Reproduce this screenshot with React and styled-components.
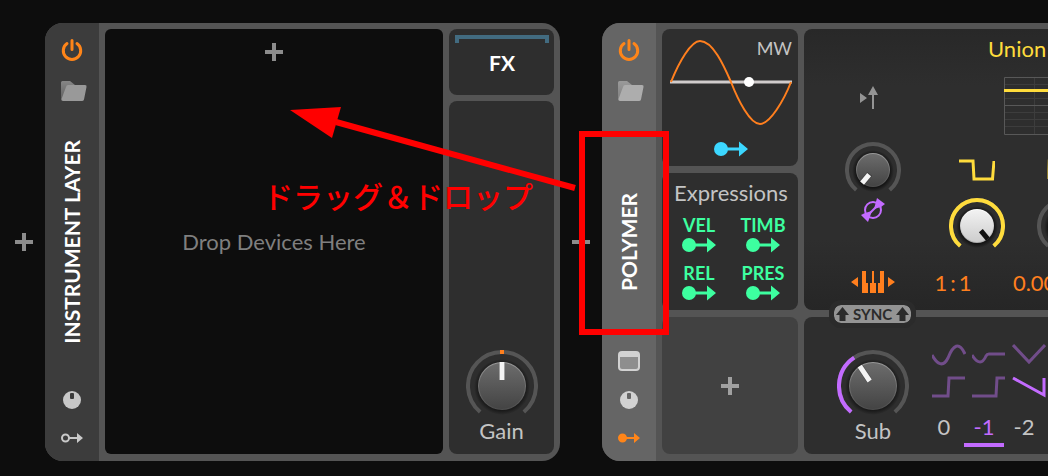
import { useId, useState } from "react";
import styled, { createGlobalStyle } from "styled-components";

const GlobalStyle = createGlobalStyle`
  * {
    box-sizing: border-box;
  }
  body {
    margin: 0;
    background: #0d0d0d;
    color: #c4c4c4;
    font-family: Lato, "Noto Sans CJK JP", sans-serif;
    font-size: 22px;
    line-height: 24px;
  }
  svg {
    display: block;
    flex: none;
  }
  button {
    padding: 0;
    border: 0;
    background: none;
    color: inherit;
    font: inherit;
    cursor: pointer;
  }
`;

const Page = styled.main`
  position: relative;
  display: flex;
  min-height: 100vh;
  padding: 23px 0 15px;
  overflow: hidden;
`;

const Gutter = styled.div`
  display: flex;
  flex: none;
  align-items: center;
  justify-content: ${(props) => props.$justify || "center"};
  width: ${(props) => props.$width};
  padding-right: ${(props) => props.$pad || "0"};
`;

const Device = styled.section`
  display: flex;
  flex: ${(props) => props.$flex};
  min-width: 0;
  border-radius: ${(props) => props.$radius};
  background: #545454;
  overflow: hidden;
`;

const Strip = styled.header`
  display: grid;
  flex: none;
  grid-template-rows: 1fr auto 1fr;
  justify-items: center;
  width: 54px;
  padding: 11px 0;
  background: ${(props) => (props.$selected ? "#656565" : "#3c3c3c")};
`;

const StripGroup = styled.div`
  display: flex;
  flex-direction: column;
  align-items: center;
  align-self: ${(props) => props.$align};
  gap: ${(props) => props.$gap};
  margin-top: 4px;
`;

const StripTitle = styled.h2`
  margin: 0;
  writing-mode: vertical-rl;
  transform: rotate(180deg);
  color: #fff;
  font-size: 21px;
  font-weight: 700;
  white-space: nowrap;
`;

const Body = styled.div`
  display: grid;
  flex: 1;
  grid-template-columns: ${(props) => props.$columns};
  gap: 6px;
  min-width: 0;
  padding: ${(props) => props.$padding};
`;

const Rows = styled.div`
  display: grid;
  grid-template-rows: ${(props) => props.$rows};
  gap: ${(props) => props.$gap};
  min-width: 0;
`;

const Panel = styled.div`
  display: flex;
  flex-direction: column;
  align-items: center;
  min-width: 0;
  padding: ${(props) => props.$padding || "0"};
  border-radius: 8px;
  background: #2e2e2e;
`;

const DropZone = styled.div`
  display: grid;
  grid-template-rows: 1fr auto 1fr;
  justify-items: center;
  padding: 14px 0;
  border-radius: 6px;
  background: #0d0d0d;
  color: #7f7f7f;
`;

const AddButton = styled.button`
  align-self: start;
`;

const FxButton = styled.button`
  display: flex;
  flex-direction: column;
  align-items: center;
  gap: 8px;
  padding: 6px 5px 6px 6px;
  border-radius: 8px;
  background: #2e2e2e;
  color: #fff;
  font-size: 21px;
  font-weight: 700;
`;

const FxBracket = styled.span`
  width: 100%;
  height: 8px;
  border: 4px solid #426b80;
  border-bottom: 0;
`;

const KnobLabel = styled.label`
  position: relative;
  display: flex;
  flex-direction: column;
  align-items: center;
  cursor: pointer;
`;

const KnobInput = styled.input`
  position: absolute;
  inset: 0;
  width: 100%;
  height: 100%;
  margin: 0;
  opacity: 0;
  cursor: pointer;
`;

const GainPanel = styled(Panel)`
  justify-content: flex-end;
  padding-bottom: 11px;
`;

const SlotButton = styled.button`
  display: flex;
  align-items: center;
  justify-content: center;
  border-radius: 8px;
  background: #414141;
`;

const Scope = styled.div`
  display: grid;
  width: 100%;

  > * {
    grid-area: 1 / 1;
  }
`;

const ScopeLabel = styled.span`
  justify-self: end;
  font-size: 18px;
  line-height: 20px;
`;

const RouteButton = styled.button`
  margin-top: 15px;
  padding-left: 2px;
  color: #3cd7ff;
`;

const PanelTitle = styled.h3`
  margin: 0;
  font-size: 22px;
  font-weight: 400;
`;

const Expressions = styled.div`
  display: grid;
  grid-template-columns: repeat(2, 64px);
  gap: 10px 0;
  margin-top: 10px;
`;

const ExpressionButton = styled.button`
  display: flex;
  flex-direction: column;
  align-items: center;
  gap: 2px;
  color: #3dffa0;
  font-size: 18px;
  font-weight: 700;
  line-height: 20px;
`;

const Oscillator = styled.div`
  display: flex;
  grid-row: span 2;
  min-width: 0;
  padding-left: 33px;
  border-radius: 8px 0 0 8px;
  background: linear-gradient(#282828, #2e2e2e 20%, #2e2e2e 75%, #262626);
  overflow: hidden;
`;

const PhaseColumn = styled.div`
  display: flex;
  flex: none;
  flex-direction: column;
  align-items: center;
  width: 72px;
  padding-top: 57px;
`;

const PhaseKnob = styled.div`
  margin-top: 32px;
`;

const KeysButton = styled.button`
  margin-top: 48px;
`;

const WaveColumn = styled.div`
  display: flex;
  flex: none;
  flex-direction: column;
  align-items: flex-start;
  gap: 16px;
  padding-top: 8px;
`;

const WaveSelect = styled.button`
  margin-left: 79px;
  color: #ffdc3c;
`;

const WaveGraph = styled.div`
  margin: 0 0 8px 95px;
`;

const Cells = styled.div`
  display: grid;
  grid-template-columns: repeat(2, 88px);
  justify-items: center;
  margin-left: ${(props) => props.$indent || "0"};
`;

const Ratio = styled.span`
  display: flex;
  gap: 3px;
  color: #ff7f1e;
  line-height: 26px;
`;

const SubPanel = styled.div`
  position: relative;
  display: flex;
  gap: 15px;
  min-width: 0;
  padding: 26px 0 0 33px;
  border-radius: 8px 0 0 8px;
  background: #2e2e2e;
`;

const SyncButton = styled.button`
  position: absolute;
  top: -17px;
  left: 25px;
  display: flex;
  align-items: center;
  gap: 4px;
  padding: 0 2px;
  border: 5px solid #2b2b2b;
  border-radius: 12px;
  background: #949494;
  background-clip: padding-box;
  color: #2b2b2b;
  font-size: 15px;
  font-weight: 700;
  line-height: 18px;
`;

const SubKnob = styled.div`
  flex: none;
  width: 72px;
  padding-top: 7px;
`;

const SubChoices = styled.div`
  flex: none;
`;

const Shapes = styled.div`
  display: grid;
  grid-template-columns: repeat(3, 40px);
  gap: 9px 0;
  padding-left: 8px;
`;

const ShapeButton = styled.button`
  color: ${(props) => (props.$active ? "#c36bff" : "#714d8a")};
`;

const Octaves = styled.div`
  display: grid;
  grid-template-columns: repeat(3, 40px);
  margin-top: 15px;
`;

const OctaveButton = styled.button`
  padding-bottom: 4px;
  border-bottom: 4px solid ${(props) => (props.$active ? "#c36bff" : "transparent")};
  color: ${(props) => (props.$active ? "#c36bff" : "#c4c4c4")};
`;

const Marker = styled.svg`
  position: absolute;
  top: 0;
  left: 0;
  pointer-events: none;
`;

const MarkerText = styled.p`
  position: absolute;
  top: 179px;
  left: 263px;
  margin: 0;
  color: #f00;
  font-family: "Noto Sans CJK JP", sans-serif;
  font-size: 30px;
  font-weight: 500;
  line-height: 32px;
  white-space: nowrap;
`;

function Plus({ color = "#8c8c8c" }) {
  return (
    <svg width="18" height="18" fill={color}>
      <path d="M7 0h4v7h7v4h-7v7H7v-7H0V7h7z" />
    </svg>
  );
}

function PowerIcon() {
  return (
    <svg width="24" height="24" fill="none" stroke="#ff8519" strokeWidth="3" strokeLinecap="round">
      <path d="M12 2.5V11.5M7 5.600a8.700 8.700 0 1 0 10 0" />
    </svg>
  );
}

function FolderIcon({ light }) {
  const id = useId();
  return (
    <svg width="30" height="22">
      <defs>
        <linearGradient id={id} x1="0" y1="0" x2="0" y2="1">
          <stop offset="0" stopColor={light ? "#9a9a9a" : "#868686"} />
          <stop offset="1" stopColor={light ? "#808080" : "#606060"} />
        </linearGradient>
      </defs>
      <path d="M4 2.500Q4 1 5.500 1H13l5 4h10l-3 8L5 20Q4 20 4 19z" fill={`url(#${id})`} />
      <path
        d="M9 7Q9.500 5 11 5h17q2 0 1.500 2L27 19.500Q26.500 21 25 21H6Q4 21 4.500 19z"
        fill={light ? "#adadad" : "#999"}
      />
    </svg>
  );
}

function WindowIcon() {
  return (
    <svg width="24" height="24">
      <rect x="1" y="1" width="22" height="20" rx="4" fill="#d2d2d2" />
      <path d="M3 7h18v10q0 2-2 2H5q-2 0-2-2z" fill="#8e8e8e" />
    </svg>
  );
}

function RemoteIcon({ color, slot }) {
  return (
    <svg width="24" height="24">
      <circle cx="12" cy="12" r="9" fill={color} />
      <rect x="10" y="5" width="4" height="6" rx="1" fill={slot} />
    </svg>
  );
}

function RouteIcon({ active }) {
  const color = active ? "#ff8519" : "#c8c8c8";
  return (
    <svg width="24" height="24" fill={color}>
      <circle cx="5.500" cy="12" r="3.500" fill={active ? color : "none"} stroke={color} strokeWidth="2" />
      <path d="M9 11h8V7l6 5-6 5v-4H9z" />
    </svg>
  );
}

function ModIcon() {
  return (
    <svg width="34" height="16" fill="currentColor">
      <circle cx="7" cy="8" r="7" />
      <path d="M13 6.500h12V.5L34 8l-9 7.500v-6H13z" />
    </svg>
  );
}

function arc(c, r, from, to) {
  const point = (deg) => {
    const a = (deg * Math.PI) / 180;
    return `${c + r * Math.sin(a)} ${c - r * Math.cos(a)}`;
  };
  return `M${point(from)}A${r} ${r} 0 ${to - from > 180 ? 1 : 0} 1 ${point(to)}`;
}

function Knob({ name, caption, size, initial, color, light, centered }) {
  const id = useId();
  const [value, setValue] = useState(initial);
  const c = size / 2;
  const r = size > 60 ? 24 : 17;
  const angle = value * 2.8 - 140;
  return (
    <KnobLabel>
      {/* the ring is open at the bottom, so a caption can move up a little */}
      <svg width={size} height={caption ? size - 3 : size}>
        <defs>
          <linearGradient id={`${id}f`} x1="0" y1="0" x2="0" y2="1">
            <stop offset="0" stopColor={light ? "#f2f2f2" : "#6c6c6c"} />
            <stop offset="1" stopColor={light ? "#cdcdcd" : "#444"} />
          </linearGradient>
          <linearGradient id={`${id}e`} x1="0" y1="0" x2="0" y2="1">
            <stop offset="0" stopColor={light ? "#fff" : "#999"} />
            <stop offset="1" stopColor={light ? "#aaa" : "#4c4c4c"} />
          </linearGradient>
          <radialGradient id={`${id}s`}>
            <stop offset="0.8" stopColor="#141414" />
            <stop offset="1" stopColor="#141414" stopOpacity="0" />
          </radialGradient>
        </defs>
        <path d={arc(c, c - 2, -140, 140)} fill="none" stroke="#555" strokeWidth="4" />
        {color && value > 0 && (
          <path d={arc(c, c - 2, -140, angle)} fill="none" stroke={color} strokeWidth="4" />
        )}
        {centered && <rect x={c - 2} y="0" width="4" height="4" fill="#ff7f1e" />}
        <circle cx={c} cy={c + 1} r={r + 4} fill={`url(#${id}s)`} />
        <circle cx={c} cy={c} r={r} fill={`url(#${id}e)`} />
        <circle cx={c} cy={c} r={r - 1} fill={`url(#${id}f)`} />
        <g transform={`rotate(${angle} ${c} ${c})`}>
          <rect x={c - 3} y={c - r} width="6" height={r > 20 ? 18 : 12} fill="#000" opacity={light ? 0 : 0.25} />
          <rect x={c - 2.5} y={c - r} width="5" height={r > 20 ? 18 : 11} fill={light ? "#111" : "#f4f4f4"} />
        </g>
      </svg>
      {caption}
      <KnobInput
        type="range"
        aria-label={name}
        value={value}
        onChange={(e) => setValue(Number(e.target.value))}
      />
    </KnobLabel>
  );
}

function SineScope() {
  return (
    <svg width="124" height="88" fill="none">
      <path d="M2 44h122" stroke="#d0cccc" strokeWidth="3" />
      <path
        d="M3 44C11 24 23 3 32 3C45 3 56 28 63 44C70 62 82 86 92 86C102 86 116 62 123 44"
        stroke="#ff7f1e"
        strokeWidth="2"
      />
      <circle cx="81" cy="44" r="5" fill="#fff" />
    </svg>
  );
}

function PhaseIcon() {
  return (
    <svg width="28" height="24" fill="#949494">
      <path d="M1 7l7 5-7 5zM14 0l5 9h-4v14h-2V9H9z" />
    </svg>
  );
}

function RetriggerIcon() {
  return (
    <svg width="24" height="24" fill="#c36bff">
      <circle cx="12" cy="12" r="8" fill="none" stroke="#c36bff" strokeWidth="2" />
      <path d="M4 20L20 4" stroke="#c36bff" strokeWidth="2" />
      <path d="M16 0l8 6-4 3-7 2zM0 17l4-2 7-2-4 11z" />
    </svg>
  );
}

function KeysIcon() {
  return (
    <svg width="44" height="24" fill="#ff7f1e">
      <path d="M0 12l7-5v10zM44 12l-7-5v10z" />
      <path d="M11 1h4v12h2v10h-6zM21 1h2v12h2v10h-6V13h2zM29 1h4v22h-6V13h2z" />
    </svg>
  );
}

function Graph() {
  const rows = [7, 21, 35, 42, 49];
  return (
    <svg width="124" height="58" fill="none" stroke="#3d3d3d">
      {rows.map((y) => (
        <path key={y} d={`M0 ${y + 0.5}h124`} />
      ))}
      <path d="M30.500 0v58M61.500 0v58M92.500 0v58" />
      <path d="M124 .5H.5v57H124M0 28.500h124" stroke="#585858" />
      <path d="M0 13.500h124" stroke="#ffdc3c" strokeWidth="3" />
    </svg>
  );
}

function PulseIcon({ dim }) {
  return (
    <svg width="36" height="23" fill="none" stroke={dim ? "#8f7d2e" : "#ffdc3c"} strokeWidth="3">
      <path d={dim ? "M1 20L2 2h16l1 18h16" : "M0 2h14l1 18h18.500L35 2"} />
    </svg>
  );
}

function SyncArrow() {
  return (
    <svg width="13" height="14" fill="currentColor">
      <path d="M6.500 0L13 8H9.500v6h-6V8H0z" />
    </svg>
  );
}

const subShapes = [
  { name: "Sine", d: "M0 12C5 21 11 25 16 15C21 2 27-2 33 11" },
  { name: "Half sine", d: "M0 12C5 20 10 22 14 13Q15 11 17 11H33" },
  { name: "Triangle", d: "M1 2L17 19 33 2" },
  { name: "Square", d: "M0 20h16L17 2H33" },
  { name: "Pulse", d: "M0 20H24L25 2H33" },
  { name: "Saw", d: "M1 2L32 19V2" },
];

const expressions = ["VEL", "TIMB", "REL", "PRES"];

function InstrumentLayer() {
  return (
    <Device $flex="none" $radius="18px">
      <Strip>
        <StripGroup $align="start" $gap="18px">
          <button aria-label="Power"><PowerIcon /></button>
          <button aria-label="Open preset"><FolderIcon /></button>
        </StripGroup>
        <StripTitle>INSTRUMENT LAYER</StripTitle>
        <StripGroup $align="end" $gap="14px">
          <button aria-label="Remote controls"><RemoteIcon color="#c8c8c8" slot="#3c3c3c" /></button>
          <button aria-label="Modulators"><RouteIcon /></button>
        </StripGroup>
      </Strip>
      <Body $columns="338px 105px" $padding="6px 6px 7px">
        <DropZone>
          <AddButton aria-label="Add device"><Plus /></AddButton>
          <span>Drop Devices Here</span>
        </DropZone>
        <Rows $rows="66px 1fr" $gap="6px">
          <FxButton>
            <FxBracket />
            FX
          </FxButton>
          <GainPanel>
            <Knob name="Gain" caption="Gain" size={72} initial={50} centered />
          </GainPanel>
        </Rows>
      </Body>
    </Device>
  );
}

function Polymer() {
  const [shape, setShape] = useState("Saw");
  const [octave, setOctave] = useState(-1);
  return (
    <Device $flex="1" $radius="18px 0 0 18px">
      <Strip $selected>
        <StripGroup $align="start" $gap="18px">
          <button aria-label="Power"><PowerIcon /></button>
          <button aria-label="Open preset"><FolderIcon light /></button>
        </StripGroup>
        <StripTitle>POLYMER</StripTitle>
        <StripGroup $align="end" $gap="14px">
          <button aria-label="Expanded view"><WindowIcon /></button>
          <button aria-label="Remote controls"><RemoteIcon color="#d2d2d2" slot="#656565" /></button>
          <button aria-label="Modulators"><RouteIcon active /></button>
        </StripGroup>
      </Strip>
      <Body $columns="136px minmax(0, 1fr)" $padding="6px 0 7px 6px">
        <Rows $rows="repeat(3, 1fr)" $gap="7px">
          <Panel $padding="9px 6px 8px">
            <Scope>
              <SineScope />
              <ScopeLabel>MW</ScopeLabel>
            </Scope>
            <RouteButton aria-label="Route mod wheel"><ModIcon /></RouteButton>
          </Panel>
          <Panel $padding="8px 3px 8px 5px">
            <PanelTitle>Expressions</PanelTitle>
            <Expressions>
              {expressions.map((name) => (
                <ExpressionButton key={name}>
                  {name}
                  <ModIcon />
                </ExpressionButton>
              ))}
            </Expressions>
          </Panel>
          <SlotButton aria-label="Add modulator"><Plus color="#a0a0a0" /></SlotButton>
        </Rows>
        <Rows $rows="repeat(3, 1fr)" $gap="7px">
          <Oscillator>
            <PhaseColumn>
              <button aria-label="Phase"><PhaseIcon /></button>
              <PhaseKnob>
                <Knob name="Phase offset" size={56} initial={0} />
              </PhaseKnob>
              <button aria-label="Retrigger"><RetriggerIcon /></button>
              <KeysButton aria-label="Keytrack"><KeysIcon /></KeysButton>
            </PhaseColumn>
            <WaveColumn>
              <WaveSelect>Union</WaveSelect>
              <WaveGraph><Graph /></WaveGraph>
              <Cells $indent="24px">
                <PulseIcon />
                <PulseIcon dim />
              </Cells>
              <Cells $indent="24px">
                <Knob name="Pulse" size={56} initial={100} color="#ffdc3c" light />
                <Knob name="Blend" size={56} initial={0} />
              </Cells>
              <Cells>
                <Ratio><span>1</span><span>:</span><span>1</span></Ratio>
                <Ratio>0.000</Ratio>
              </Cells>
            </WaveColumn>
          </Oscillator>
          <SubPanel>
            <SyncButton><SyncArrow />SYNC<SyncArrow /></SyncButton>
            <SubKnob>
              <Knob name="Sub" caption="Sub" size={72} initial={38} color="#c36bff" />
            </SubKnob>
            <SubChoices>
              <Shapes>
                {subShapes.map((s) => (
                  <ShapeButton
                    key={s.name}
                    aria-label={s.name}
                    $active={s.name === shape}
                    onClick={() => setShape(s.name)}
                  >
                    <svg width="34" height="24" fill="none" stroke="currentColor" strokeWidth="3">
                      <path d={s.d} />
                    </svg>
                  </ShapeButton>
                ))}
              </Shapes>
              <Octaves>
                {[0, -1, -2].map((n) => (
                  <OctaveButton key={n} $active={n === octave} onClick={() => setOctave(n)}>
                    {n}
                  </OctaveButton>
                ))}
              </Octaves>
            </SubChoices>
          </SubPanel>
        </Rows>
      </Body>
    </Device>
  );
}

export default function App() {
  return (
    <>
      <GlobalStyle />
      <Page>
        <Gutter $width="45px" $justify="flex-end" $pad="12px">
          <button aria-label="Insert before"><Plus /></button>
        </Gutter>
        <InstrumentLayer />
        <Gutter $width="42px">
          <button aria-label="Insert between"><Plus /></button>
        </Gutter>
        <Polymer />
        <Marker width="700" height="476">
          <rect x="582" y="134" width="84" height="198" fill="none" stroke="#f00" strokeWidth="6" />
          <path d="M575 188L336 122" stroke="#f00" strokeWidth="6" />
          <path d="M290 110l51-3-9 31z" fill="#f00" />
        </Marker>
        <MarkerText>ドラッグ＆ドロップ</MarkerText>
      </Page>
    </>
  );
}
